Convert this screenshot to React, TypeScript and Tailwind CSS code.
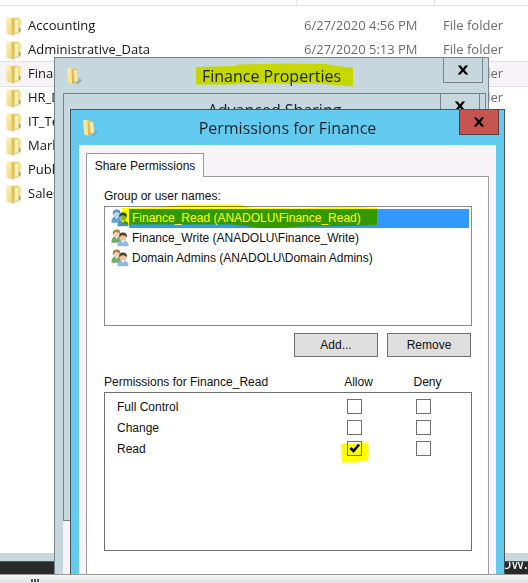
import { useState } from "react";
import type { ReactNode } from "react";
import clsx from "clsx";

const folders = [
  { name: "Accounting", date: "6/27/2020 4:56 PM" },
  { name: "Administrative_Data", date: "6/27/2020 5:13 PM" },
  { name: "Finance", date: "6/27/2020 4:56 PM", selected: true },
  { name: "HR_Data", date: "6/27/2020 4:56 PM" },
  { name: "IT_Tech", date: "6/27/2020 4:56 PM" },
  { name: "Marketing", date: "6/27/2020 4:56 PM" },
  { name: "Public", date: "6/27/2020 4:56 PM" },
  { name: "Sales", date: "6/27/2020 4:56 PM" },
];

const groups = [
  "Finance_Read (ANADOLU\\Finance_Read)",
  "Finance_Write (ANADOLU\\Finance_Write)",
  "Domain Admins (ANADOLU\\Domain Admins)",
];

const permissions = [
  { name: "Full Control", allow: false, deny: false },
  { name: "Change", allow: false, deny: false },
  { name: "Read", allow: true, deny: false },
];

const FolderIcon = () => (
  <svg viewBox="0 0 16 19" className="h-[19px] w-4 shrink-0" aria-hidden="true">
    <defs>
      <linearGradient id="folder-front" x1="0" x2="1" y1="0" y2="1">
        <stop offset="0" stopColor="#fdf4c0" />
        <stop offset="1" stopColor="#e8cb66" />
      </linearGradient>
      <linearGradient id="folder-back" x1="0" x2="1" y1="0" y2="0">
        <stop offset="0" stopColor="#e0c158" />
        <stop offset="1" stopColor="#f5e396" />
      </linearGradient>
    </defs>
    <path d="M6 0.800 13 0.800 14.800 2.500 14.800 16.500 7 17.200Z" fill="url(#folder-back)" />
    <path d="M8.500 2.800 12 2.400 12 15.200 8.500 16.200Z" fill="#fbf0b8" />
    <path d="M0.300 0.600 5.500 0.600 8.200 2.800 8.200 18.400 0.300 16.400Z" fill="url(#folder-front)" />
    <path d="M5.500 0.800 8.200 2.800 8.200 18.400 6.600 18Z" fill="#dcbc55" />
    <path d="M12.800 11h1.500v4h-1.500z" fill="#62b3c4" />
  </svg>
);

const OpenFolderIcon = () => (
  <svg viewBox="0 0 17 18" className="h-[18px] w-[17px] shrink-0" aria-hidden="true">
    <path d="M9 16.500 14 11.500 16 13.500 12 17Z" fill="#8e9ba0" opacity="0.700" />
    <path d="M5 1 11.500 2.500 12.500 14 6 16Z" fill="#e6c65d" />
    <path d="M8 3.500 11 3.800 11.800 13 9 14.500Z" fill="#fbeeb0" />
    <path d="M1 1 5.500 1.200 7 4 8.200 17.200 2.200 15.500Z" fill="#f8e79f" />
    <path d="M5.500 2 7 4 8.200 17.200 6 16.400Z" fill="#d8b550" />
    <path d="M12 10h1v4h-1z" fill="#8fb8bd" />
  </svg>
);

const UsersIcon = ({ selected }: { selected: boolean }) => (
  <svg viewBox="0 0 18 18" className="size-[18px] shrink-0" aria-hidden="true">
    <path d="M0.500 13.800C0.300 9.500 2 7.600 5.200 7.600s5 2 4.800 6.200Z" fill={selected ? "#5fa3d0" : "#6fae6a"} />
    <path d="M4.200 7.500 5.500 10.500 7 7.500Z" fill="#eef5ee" />
    <circle cx="5.500" cy="4.600" r="3.600" fill={selected ? "#b5d5ec" : "#f0d2b0"} />
    <path
      d="M1.800 5.200C1.400 1.800 3.400 0.300 5.800 0.400c2.600 0 3.800 1.600 3.500 3.800C7.400 4 6 3.400 5 2.600 4.200 4 3 4.600 1.800 5.200Z"
      fill={selected ? "#5d93c2" : "#a3824a"}
    />
    <path d="M6.500 17.300C6.300 13.200 8.400 11.400 12 11.400s5.700 1.800 5.500 5.900Z" fill={selected ? "#4b93c6" : "#8fb9e0"} />
    <path d="M10.400 11.300 12 14.200l1.700-2.900Z" fill="#fff" />
    <circle cx="12" cy="8" r="3.600" fill={selected ? "#8bb4d0" : "#ecc39b"} />
    <path
      d="M8.200 8.400C7.800 4.800 9.600 3.600 12.200 3.600s4.200 1.600 3.700 4.800C15.200 6.800 13.200 6.600 11.600 6 10.400 6.400 9.200 7.200 8.200 8.400Z"
      fill={selected ? "#24506f" : "#55402f"}
    />
  </svg>
);

const CloseIcon = () => (
  <svg viewBox="0 0 12 10" className="h-[10px] w-3" aria-hidden="true">
    <path d="M0.800 0.500h3L6 3.400 8.200 0.500h3L7.600 4.900 11.400 9.500h-3L6 6.400 3.600 9.500h-3L4.400 4.900Z" fill="#000" />
  </svg>
);

type WindowProps = {
  title: string;
  className: string;
  active?: boolean;
  icon?: boolean;
  mark?: ReactNode;
  children?: ReactNode;
};

const Window = ({ title, className, active, icon = true, mark, children }: WindowProps) => (
  <section
    className={clsx(
      "absolute flex flex-col border",
      active ? "border-[#4a5559] bg-[#63cbef]" : "border-[#78848a] bg-[#c6d7de]",
      className
    )}
  >
    <header
      className={clsx("grid shrink-0 grid-cols-[45px_1fr_45px]", icon ? "h-[35px]" : "h-8")}
    >
      <div className="flex items-center pl-[11px]">{icon && <OpenFolderIcon />}</div>
      <h2 className="flex items-center justify-center font-['Open_Sans',sans-serif] text-[16px] whitespace-nowrap text-[#182228]">
        <span className="relative">
          {title}
          {mark}
        </span>
      </h2>
      <button
        type="button"
        aria-label={`Close ${title}`}
        className={clsx(
          "flex h-[25px] w-10 items-center justify-center border border-t-0",
          active ? "border-[#5d3a3a] bg-[#c6554f]" : "border-[#78848a]"
        )}
      >
        <CloseIcon />
      </button>
    </header>
    {children}
  </section>
);

const Explorer = () => (
  <main className="min-h-0 flex-1 overflow-hidden bg-white font-['Open_Sans',sans-serif] text-[13px]">
    <div className="grid h-[6px] grid-cols-[297px_138px_1fr] border-b border-[#e4e4e4]">
      <span className="border-r border-[#e4e4e4]" />
      <span className="border-r border-[#e4e4e4]" />
    </div>
    <table className="mt-2 w-full table-fixed">
      <colgroup>
        <col className="w-[297px]" />
        <col className="w-[138px]" />
        <col />
      </colgroup>
      <tbody>
        {folders.map((folder) => (
          <tr
            key={folder.name}
            className={clsx("h-6", folder.selected && "bg-[#f7f3f7] outline outline-[#e2dfe3]")}
          >
            <td className="p-0 pl-[6px]">
              <div className="flex items-center gap-[6px] text-[#151515]">
                <FolderIcon />
                {folder.name}
              </div>
            </td>
            <td className="p-0 pl-[7px] whitespace-nowrap text-[#6d6d6d]">{folder.date}</td>
            <td className="p-0 pl-2 whitespace-nowrap text-[#6d6d6d]">File folder</td>
          </tr>
        ))}
      </tbody>
    </table>
  </main>
);

const Tick = ({ label, initial, marked }: { label: string; initial: boolean; marked?: boolean }) => {
  const [checked, setChecked] = useState(initial);
  return (
    <label className="relative flex size-[15px]">
      <input
        type="checkbox"
        aria-label={label}
        checked={checked}
        onChange={() => setChecked(!checked)}
        className="size-[15px] appearance-none border border-[#707070] bg-white"
      />
      {checked && (
        <svg viewBox="0 0 15 15" className="pointer-events-none absolute inset-0 size-[15px]">
          <path d="M3.500 7 6.500 10 12 3.500" fill="none" stroke="#000" strokeWidth="2.600" />
        </svg>
      )}
      {marked && (
        <svg
          viewBox="0 0 28 21"
          className="pointer-events-none absolute top-px -left-[6px] h-[21px] w-7 max-w-none mix-blend-multiply"
        >
          <path d="M0 2 18 1.500 19 0.500H27.500V18.500L18 19 16 20.500H1Z" fill="#ff0" />
        </svg>
      )}
    </label>
  );
};

const GroupList = () => {
  const [selected, setSelected] = useState(0);
  return (
    <ul
      role="listbox"
      aria-labelledby="groups-label"
      className="relative h-[120px] border border-[#8a8a96] py-[2px] pr-[2px] pl-[6px]"
    >
      {groups.map((group, index) => (
        <li
          key={group}
          role="option"
          aria-selected={index === selected}
          onClick={() => setSelected(index)}
          className="flex h-5 items-start"
        >
          <UsersIcon selected={index === selected} />
          <span
            className={clsx(
              "h-[19px] flex-1 pl-[3px] leading-[19px]",
              index === selected && "bg-[#3399ff] text-white"
            )}
          >
            {group}
          </span>
        </li>
      ))}
      {/* highlighter stroke over the first entry */}
      <svg
        viewBox="0 0 256 26"
        className="pointer-events-none absolute -top-1 left-4 h-[26px] w-64 mix-blend-multiply"
      >
        <path
          d="M1 5 40 4 60 1.500H119L130 4.500 180 5.500 200 4 232 3.500 256 5V22L235 23 180 23.500 160 25H140L125 23 110 21.500H8L1 21Z"
          fill="#ff0"
        />
      </svg>
    </ul>
  );
};

const PermissionTable = () => (
  <table className="mt-[15px] block">
    <thead className="block">
      <tr className="grid grid-cols-[1fr_69px_69px] pr-[14px] leading-[20px]">
        <th className="text-left font-normal">Permissions for Finance_Read</th>
        <th className="pl-2 font-normal">Allow</th>
        <th className="pl-2 font-normal">Deny</th>
      </tr>
    </thead>
    <tbody className="block h-[159px] border border-[#707070] pt-[3px]">
      {permissions.map((item) => (
        <tr key={item.name} className="grid h-[21px] grid-cols-[1fr_69px_69px] items-center pr-[13px] pl-3">
          <th scope="row" className="text-left font-normal">
            {item.name}
          </th>
          <td className="flex justify-center">
            <Tick label={`Allow ${item.name}`} initial={item.allow} marked={item.allow} />
          </td>
          <td className="flex justify-center">
            <Tick label={`Deny ${item.name}`} initial={item.deny} />
          </td>
        </tr>
      ))}
    </tbody>
  </table>
);

const SharePermissions = () => (
  <div className="mx-2 flex min-h-0 flex-1 flex-col bg-[#f7f3f7] px-[7px] pt-2 font-['Liberation_Sans',sans-serif] text-[12px] text-[#111]">
    <div role="tablist" className="relative z-10 -mb-px flex">
      <button
        type="button"
        role="tab"
        aria-selected="true"
        className="h-6 w-[118px] border border-b-0 border-[#9c9ca3] bg-white whitespace-nowrap"
      >
        Share Permissions
      </button>
    </div>
    <div className="flex-1 border border-b-0 border-[#9c9ca3] bg-white pt-[9px] pr-4 pl-[17px]">
      <p id="groups-label" className="leading-[20px]">
        Group or user names:
      </p>
      <GroupList />
      <div className="mt-[7px] flex justify-end gap-[9px] pr-px">
        <button type="button" className="h-6 w-[84px] border border-[#707070] bg-[#dedede]">
          Add...
        </button>
        <button type="button" className="h-6 w-[84px] border border-[#707070] bg-[#dedede]">
          Remove
        </button>
      </div>
      <PermissionTable />
    </div>
  </div>
);

const TitleMark = () => (
  <svg
    viewBox="0 0 158 24"
    preserveAspectRatio="none"
    className="pointer-events-none absolute -top-px -left-[6px] h-6 w-[158px] max-w-none mix-blend-multiply"
  >
    <path
      d="M0 4 40 3 42 1.500 90 0.500 130 1 145 3.500 157 4.500V23.500L140 22 120 20.500H40L38 21.500H0Z"
      fill="#ff0"
    />
  </svg>
);

const App = () => {
  return (
    <div className="flex h-screen flex-col overflow-hidden">
      <div className="relative flex min-h-0 flex-1 flex-col overflow-hidden">
        <Explorer />
        <div className="h-2 shrink-0 bg-[#c6d7de]" />
        <footer className="flex h-[13px] shrink-0 justify-end overflow-hidden border-t border-[#555] bg-[#292a29] font-['Open_Sans',sans-serif] text-[16px] leading-[2px] text-white">
          ow.
        </footer>

        <Window
          title="Finance Properties"
          className="top-[57px] -bottom-2 left-[54px] w-[435px]"
          mark={<TitleMark />}
        >
          <div className="mx-2 flex-1 bg-[#f7f3f7]" />
        </Window>
        <Window
          title="Advanced Sharing"
          icon={false}
          className="top-[93px] left-[63px] h-[428px] w-[423px]"
        />
        <Window
          title="Permissions for Finance"
          active
          className="top-[109px] -bottom-2 left-[70px] w-[435px]"
        >
          <SharePermissions />
        </Window>
      </div>

      {/* horizontal scroll strip */}
      <div className="h-[9px] shrink-0 border-t border-[#9a9a9a] bg-linear-to-b from-[#f6f6f6] to-[#e2e2e2] pt-1 pl-[31px]">
        <div className="flex gap-px">
          <span className="h-[3px] w-[2px] bg-[#555]" />
          <span className="h-[3px] w-[2px] bg-[#555]" />
          <span className="h-[3px] w-[2px] bg-[#555]" />
        </div>
      </div>
    </div>
  );
};

export default App;
